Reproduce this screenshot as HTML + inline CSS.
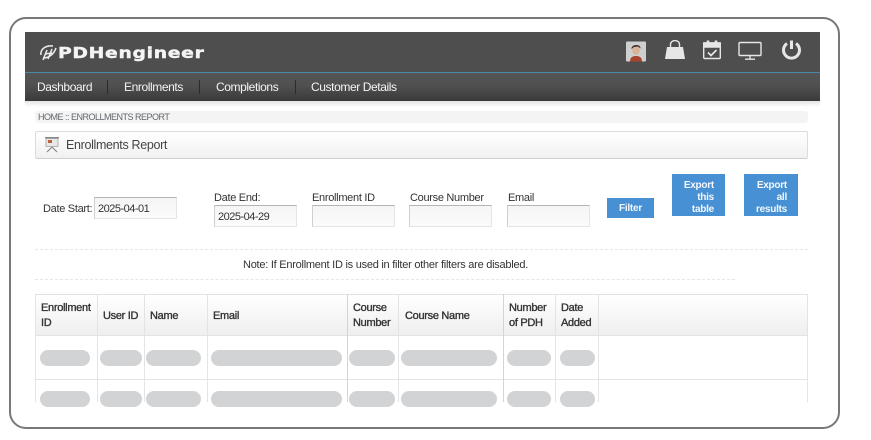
<!DOCTYPE html>
<html>
<head>
<meta charset="utf-8">
<style>
html,body{margin:0;padding:0;background:#fff;}
body{width:871px;height:440px;position:relative;overflow:hidden;font-family:"Liberation Sans",sans-serif;color:#333;font-size:11px;}
.a{position:absolute;white-space:nowrap;}
.frame{position:absolute;left:9px;top:17px;width:827px;height:408px;border:2px solid #77787b;border-radius:17px;box-sizing:content-box;}
.top{position:absolute;left:25px;top:32px;width:795px;height:40px;background:#4e4e4e;}
.line{position:absolute;left:25px;top:72px;width:795px;height:1px;background:#4b87a6;}
.nav{position:absolute;left:25px;top:73px;width:795px;height:28px;background:linear-gradient(#555 0,#505050 45%,#3a3a3a 100%);}
.nv{position:absolute;top:80px;color:#f4f4f4;font-size:12px;letter-spacing:-.4px;white-space:nowrap;}
.sep{position:absolute;top:80px;width:1px;height:14px;background:#2b2b2b;}
.shadow{position:absolute;left:25px;top:101px;width:795px;height:6px;background:linear-gradient(#e4e4e4,#fff);}
.crumb{position:absolute;left:35px;top:111px;width:773px;height:12px;background:#f4f4f4;border-radius:3px;}
.title{position:absolute;left:35px;top:131px;width:771px;height:26px;border:1px solid #dcdcdc;border-bottom-color:#cfcfcf;border-radius:2px;background:linear-gradient(#fff,#f1f1f1);}
.inp{position:absolute;box-sizing:border-box;height:22px;width:83px;border:1px solid #e4e4e4;border-top-color:#b5b5b5;border-left-color:#cfcfcf;background:linear-gradient(#f5f5f5,#fbfbfb);font-size:11px;letter-spacing:-.5px;line-height:22px;padding-left:3px;color:#333;}
.lb{position:absolute;font-size:11px;letter-spacing:-.3px;white-space:nowrap;color:#333;}
.btn{position:absolute;background:#4690d3;color:#f4f8fc;font-weight:bold;font-size:10px;letter-spacing:-.25px;line-height:12px;text-align:right;box-sizing:border-box;}
.dash{position:absolute;left:35px;height:0;border-top:1px dashed #e6e6e6;}
.tb{position:absolute;left:35px;top:294px;width:773px;height:108px;}
.hd{position:absolute;left:0;top:0;width:773px;height:41px;background:linear-gradient(#fff,#efefef);border-top:1px solid #e2e2e2;box-sizing:border-box;}
.v{position:absolute;top:0;width:1px;height:108px;background:#e4e4e4;}
.h{position:absolute;left:0;width:773px;height:1px;background:#e4e4e4;}
.th{position:absolute;font-size:11px;letter-spacing:-.3px;-webkit-text-stroke:.35px #333;line-height:15px;color:#333;white-space:nowrap;}
.pill{position:absolute;height:16px;border-radius:8px;background:#d2d3d4;}
</style>
</head>
<body>
<div class="frame"></div>
<div class="top"></div>
<div class="line"></div>
<div class="nav"></div>

<svg class="a" style="left:38px;top:43px" width="20" height="20" viewBox="0 0 20 20" fill="none" stroke="#eee" stroke-width="1.5">
  <path d="M3 12C2 6 8 2 15 3"/><path d="M5 15C11 15 16 11 18 5"/><path d="M9 7L5 17"/><path d="M14 6L10 16"/><path d="M7 11L14 10"/>
</svg>
<div class="a" style="left:58px;top:44px;color:#f4f4f4;font-weight:bold;font-size:15px;line-height:18px;letter-spacing:.55px;-webkit-text-stroke:.4px #f4f4f4;transform-origin:0 50%;transform:scaleX(1.25);font-family:'DejaVu Sans',sans-serif;">PDHengineer</div>

<svg class="a" style="left:626px;top:41px" width="21" height="21" viewBox="0 0 21 21">
  <rect width="20" height="20" y="0.5" rx="1" fill="#cfcfcf"/>
  <ellipse cx="10" cy="9" rx="3.800" ry="5" fill="#d9b39a"/>
  <path d="M5.500 8C5 3 15 2.500 14.500 7.500L12 5.500L8 6Z" fill="#3c3330"/>
  <path d="M4 20.500C4 16 7 15 10 15S16 16 16 20.500Z" fill="#a8442e"/>
</svg>
<svg class="a" style="left:664px;top:39px" width="22" height="22" viewBox="0 0 22 22" fill="none">
  <path d="M3 8H19L21 20H1Z" fill="#e6e6e6"/>
  <path d="M6.500 10V5.500C6.500 0.300 15.500 0.300 15.500 5.500V10" stroke="#e6e6e6" stroke-width="1.400"/>
</svg>
<svg class="a" style="left:701px;top:39px" width="22" height="22" viewBox="0 0 22 22" fill="none" stroke="#e6e6e6" stroke-width="1.400">
  <rect x="2.700" y="4" width="16.600" height="15.500" rx="1"/>
  <path d="M2.700 4H19.300V8H2.700Z" fill="#e6e6e6"/>
  <path d="M7 1.500V5M15 1.500V5" stroke-width="2.600"/>
  <path d="M7 13.500L10 16.500L15.500 11" stroke-width="1.700"/>
</svg>
<svg class="a" style="left:738px;top:40px" width="24" height="22" viewBox="0 0 24 22" fill="none" stroke="#e6e6e6" stroke-width="1.400">
  <rect x="1" y="2.500" width="22" height="13" rx="1"/>
  <path d="M12 15.500V19M7 19.200H17"/>
</svg>
<svg class="a" style="left:780px;top:37px" width="23" height="23" viewBox="0 0 23 23" fill="none" stroke="#e6e6e6" stroke-width="3">
  <path d="M7 6.500A8 8 0 1 0 16 6.500"/>
  <path d="M11.500 3.500V12"/>
</svg>

<div class="nv" style="left:37px;">Dashboard</div>
<div class="sep" style="left:107px;"></div>
<div class="nv" style="left:124px;">Enrollments</div>
<div class="sep" style="left:199px;"></div>
<div class="nv" style="left:216px;">Completions</div>
<div class="sep" style="left:295px;"></div>
<div class="nv" style="left:311px;">Customer Details</div>
<div class="shadow"></div>

<div class="crumb"></div>
<div class="a" style="left:38px;top:111px;font-size:9px;letter-spacing:-.5px;line-height:12px;color:#5f666c;">HOME :: ENROLLMENTS REPORT</div>
<div class="title"></div>
<svg class="a" style="left:44px;top:136px" width="16" height="17" viewBox="0 0 16 17">
  <rect x="1" y="1" width="14" height="1.500" fill="#8a8a8a"/>
  <rect x="2" y="2.500" width="12" height="8" fill="#e8e8e8" stroke="#9a9a9a" stroke-width=".7"/>
  <rect x="4" y="4" width="4" height="3" fill="#c0623a"/>
  <path d="M8 11L3 16M8 11L13 16" stroke="#8a8a8a" stroke-width="1.200"/>
</svg>
<div class="a" style="left:66px;top:138px;font-size:12.500px;letter-spacing:-.33px;line-height:15px;color:#444;">Enrollments Report</div>

<div class="lb" style="left:43px;top:203px;">Date Start:</div>
<div class="inp" style="left:94px;top:197px;">2025-04-01</div>
<div class="lb" style="left:214px;top:192px;">Date End:</div>
<div class="inp" style="left:214px;top:205px;">2025-04-29</div>
<div class="lb" style="left:312px;top:192px;">Enrollment ID</div>
<div class="inp" style="left:312px;top:205px;"></div>
<div class="lb" style="left:410px;top:192px;">Course Number</div>
<div class="inp" style="left:409px;top:205px;"></div>
<div class="lb" style="left:508px;top:192px;">Email</div>
<div class="inp" style="left:507px;top:205px;"></div>

<div class="btn" style="left:607px;top:198px;width:47px;height:20px;line-height:21px;text-align:center;">Filter</div>
<div class="btn" style="left:672px;top:174px;width:53px;height:42px;padding:6px 11px 0 0;">Export<br>this<br>table</div>
<div class="btn" style="left:744px;top:174px;width:54px;height:42px;padding:6px 11px 0 0;">Export<br>all<br>results</div>

<div class="dash" style="top:249px;width:773px;"></div>
<div class="a" style="left:243px;top:258px;font-size:11px;letter-spacing:-.25px;line-height:14px;color:#333;">Note: If Enrollment ID is used in filter other filters are disabled.</div>
<div class="dash" style="top:279px;width:700px;"></div>

<div class="tb">
  <div class="hd"></div>
  <div class="h" style="top:41px;"></div>
  <div class="h" style="top:85px;"></div>
  <div class="v" style="left:0;"></div>
  <div class="v" style="left:62px;"></div>
  <div class="v" style="left:109px;"></div>
  <div class="v" style="left:172px;"></div>
  <div class="v" style="left:312px;background:#d4d4d4;"></div>
  <div class="v" style="left:363px;"></div>
  <div class="v" style="left:468px;background:#d4d4d4;"></div>
  <div class="v" style="left:520px;"></div>
  <div class="v" style="left:563px;"></div>
  <div class="v" style="left:772px;"></div>
</div>

<div class="th" style="left:41px;top:301px;">Enrollment<br>ID</div>
<div class="th" style="left:103px;top:309px;">User ID</div>
<div class="th" style="left:150px;top:309px;">Name</div>
<div class="th" style="left:213px;top:309px;">Email</div>
<div class="th" style="left:353px;top:301px;">Course<br>Number</div>
<div class="th" style="left:405px;top:309px;">Course Name</div>
<div class="th" style="left:509px;top:301px;">Number<br>of PDH</div>
<div class="th" style="left:561px;top:301px;">Date<br>Added</div>

<div class="pill" style="left:40px;top:350px;width:50px;"></div>
<div class="pill" style="left:100px;top:350px;width:42px;"></div>
<div class="pill" style="left:146px;top:350px;width:55px;"></div>
<div class="pill" style="left:211px;top:350px;width:131px;"></div>
<div class="pill" style="left:349px;top:350px;width:46px;"></div>
<div class="pill" style="left:401px;top:350px;width:96px;"></div>
<div class="pill" style="left:507px;top:350px;width:44px;"></div>
<div class="pill" style="left:560px;top:350px;width:35px;"></div>

<div class="pill" style="left:40px;top:391px;width:50px;"></div>
<div class="pill" style="left:100px;top:391px;width:42px;"></div>
<div class="pill" style="left:146px;top:391px;width:55px;"></div>
<div class="pill" style="left:211px;top:391px;width:131px;"></div>
<div class="pill" style="left:349px;top:391px;width:46px;"></div>
<div class="pill" style="left:401px;top:391px;width:96px;"></div>
<div class="pill" style="left:507px;top:391px;width:44px;"></div>
<div class="pill" style="left:560px;top:391px;width:35px;"></div>
</body>
</html>
